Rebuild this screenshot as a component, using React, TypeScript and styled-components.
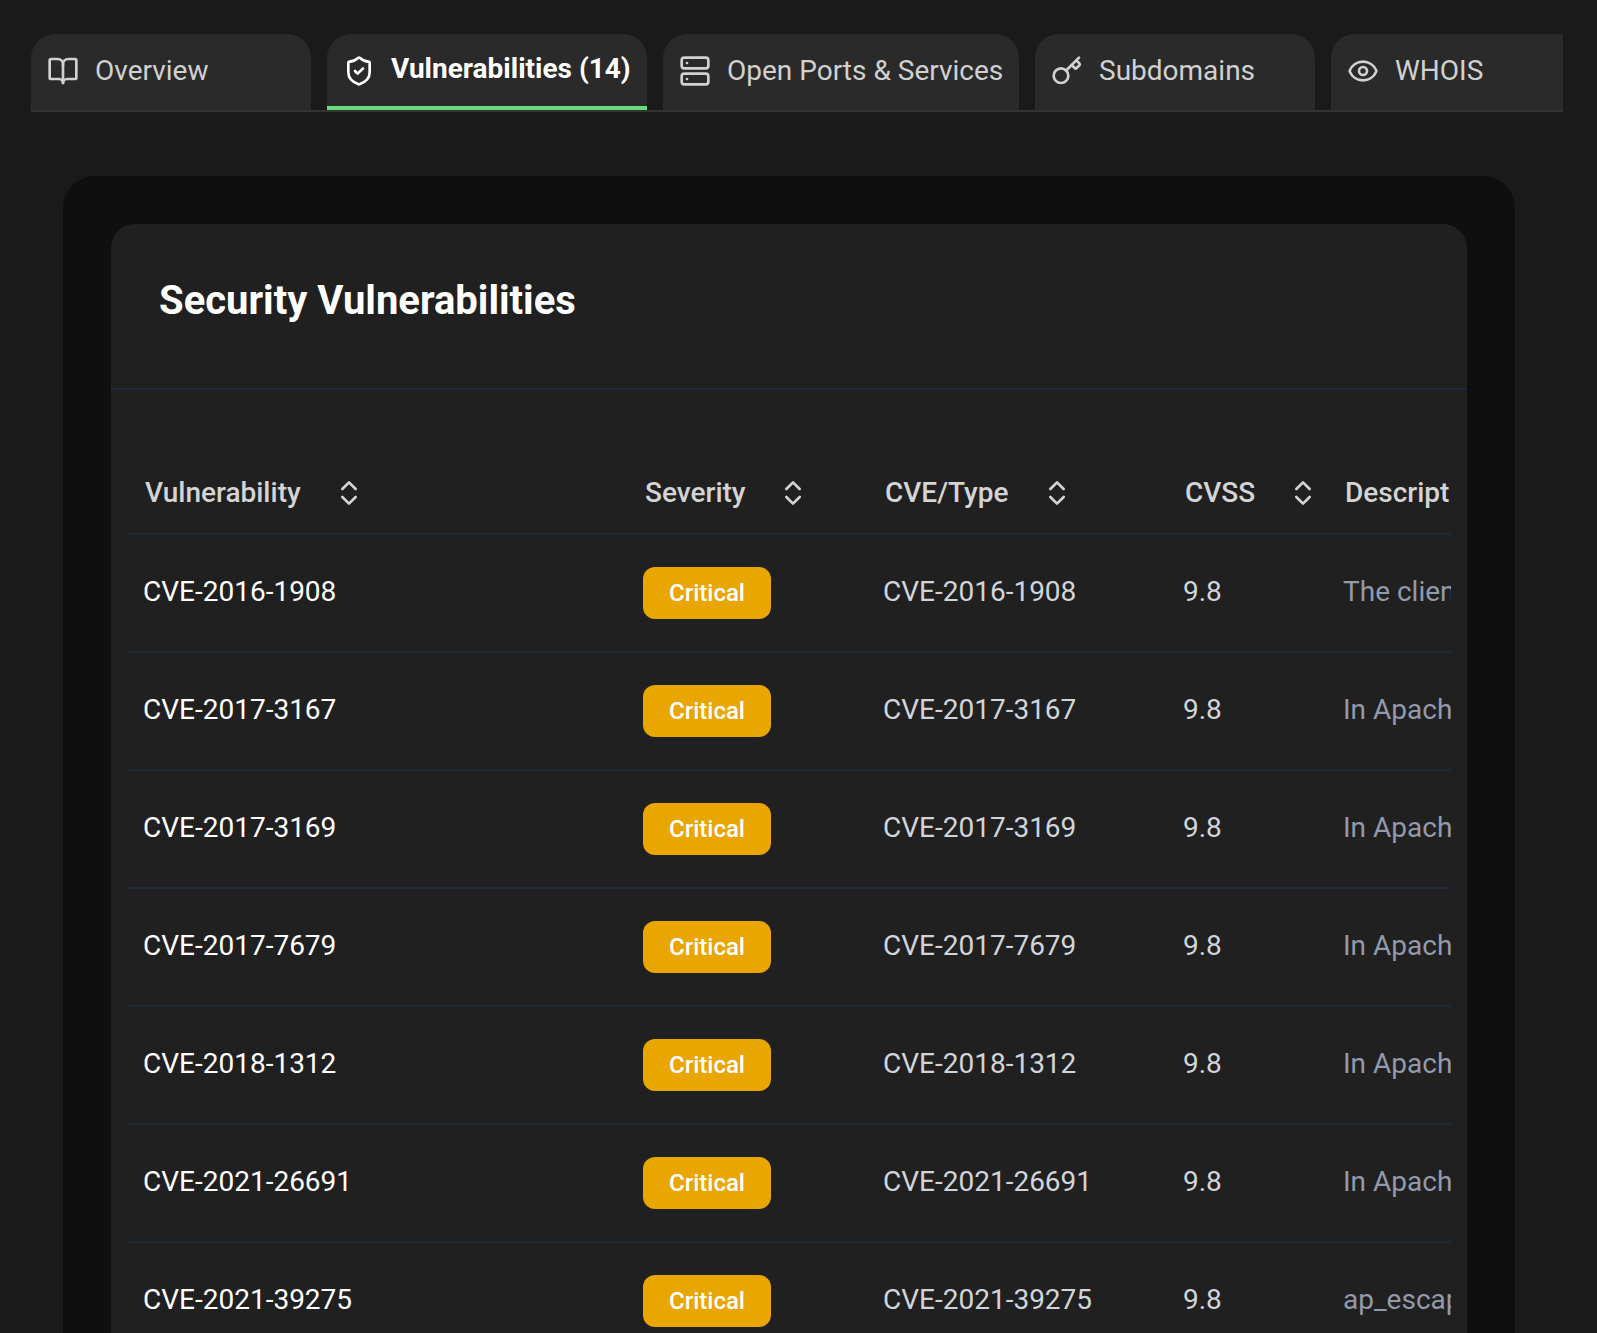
import React from "react";
import styled, { createGlobalStyle } from "styled-components";
import { Server, Eye, ChevronsUpDown, BookOpen, ShieldCheck, Key } from "lucide-react";

const Global = createGlobalStyle`
  html, body { margin: 0; padding: 0; background: #1a1a1a; overflow: hidden; height: 100%; }
  body { font-family: Roboto, "Noto Sans", sans-serif; }
`;

const Page = styled.div`
  width: 1597px;
  height: 1333px;
  overflow: hidden;
  padding: 34px 34px 0 31px;
  box-sizing: border-box;
`;

const TabBar = styled.div`
  display: flex;
  gap: 16px;
  border-bottom: 2px solid #333333;
  height: 76px;
  width: 1532px;
`;

const Tab = styled.div<{ $active?: boolean; $width: number; $last?: boolean }>`
  width: ${(p) => p.$width}px;
  box-sizing: border-box;
  height: 76px;
  background: #2a2a2a;
  border-radius: ${(p) => (p.$last ? "24px 0 0 0" : "24px 24px 0 0")};
  border-bottom: 4px solid ${(p) => (p.$active ? "#69db7c" : "transparent")};
  display: flex;
  align-items: center;
  gap: 16px;
  padding: 2px 0 0 16px;
  font-size: 28px;
  font-weight: ${(p) => (p.$active ? 700 : 400)};
  color: ${(p) => (p.$active ? "#ffffff" : "#d1d1d1")};
  white-space: nowrap;
`;

const TabLabel = styled.span<{ $active?: boolean }>`
  position: relative;
  top: ${(p) => (p.$active ? -2 : 0)}px;
  line-height: 32px;
`;

const Outer = styled.section`
  margin: 64px 0 0 32px;
  width: 1452px;
  background: #0f0f0f;
  border-radius: 32px 32px 0 0;
  padding: 48px 48px 0;
  box-sizing: border-box;
  height: 1200px;
`;

const Card = styled.div`
  background: #202020;
  border-radius: 24px 24px 0 0;
  height: 1152px;
  overflow: hidden;
`;

const CardHead = styled.header`
  height: 166px;
  box-sizing: border-box;
  border-bottom: 2px solid #1e293b;
  padding: 53px 48px 0;
`;

const Title = styled.h2`
  margin: 0;
  font-size: 40px;
  line-height: 48px;
  font-weight: 700;
  color: #ffffff;
`;

const TableWrap = styled.div`
  margin: 0 16px;
  overflow: hidden;
`;

const Table = styled.table`
  border-collapse: collapse;
  table-layout: fixed;
  width: 1600px;
`;

const Th = styled.th`
  height: 144px;
  box-sizing: border-box;
  padding: 62px 0 0 18px;
  text-align: left;
  font-size: 28px;
  font-weight: 500;
  color: #d4d4d4;
  border-bottom: 2px solid #1e293b;
  white-space: nowrap;
`;

const ThInner = styled.div`
  display: flex;
  align-items: center;
  height: 48px;
`;

const Sort = styled(ChevronsUpDown)<{ $gap: number }>`
  margin-left: ${(p) => p.$gap}px;
  width: 32px;
  height: 32px;
  color: #d4d4d4;
  flex: none;
`;

const Tr = styled.tr`
  height: 118px;
`;

const Td = styled.td<{ $tone?: string }>`
  padding: 0 0 4px 16px;
  height: 118px;
  box-sizing: border-box;
  font-size: 28px;
  color: ${(p) => p.$tone || "#d1d5db"};
  border-bottom: 2px solid #1e293b;
  white-space: nowrap;
  overflow: hidden;
`;

const BadgeCell = styled(Td)`
  padding-bottom: 0;
`;

const Badge = styled.span`
  display: inline-flex;
  align-items: center;
  justify-content: center;
  width: 128px;
  height: 52px;
  border-radius: 12px;
  background: #e9a500;
  color: #ffffff;
  font-size: 24px;
  font-weight: 500;
  vertical-align: middle;
`;

const tabs = [
  { label: "Overview", w: 280, icon: <BookOpen size={32} strokeWidth={2} /> },
  { label: "Vulnerabilities (14)", w: 320, active: true, icon: <ShieldCheck size={32} strokeWidth={2} /> },
  { label: "Open Ports & Services", w: 356, icon: <Server size={32} strokeWidth={2} /> },
  { label: "Subdomains", w: 280, icon: <Key size={32} strokeWidth={2} /> },
  { label: "WHOIS", w: 232, last: true, icon: <Eye size={32} strokeWidth={2} /> },
];

const rows = [
  ["CVE-2016-1908", "The client in OpenSSH before 7.2 mishandles failed cookie generation"],
  ["CVE-2017-3167", "In Apache httpd 2.2.x before 2.2.33 and 2.4.x before 2.4.26"],
  ["CVE-2017-3169", "In Apache httpd 2.2.x before 2.2.33 and 2.4.x before 2.4.26"],
  ["CVE-2017-7679", "In Apache httpd 2.2.x before 2.2.33 and 2.4.x before 2.4.26"],
  ["CVE-2018-1312", "In Apache httpd 2.2.0 to 2.4.29, when generating an HTTP Digest"],
  ["CVE-2021-26691", "In Apache HTTP Server versions 2.4.0 to 2.4.46 a crafted SessionHeader"],
  ["CVE-2021-39275", "ap_escape_quotes() may write beyond the end of a buffer"],
];

const cols = [
  { label: "Vulnerability", w: 500, gap: 32 },
  { label: "Severity", w: 240, gap: 31 },
  { label: "CVE/Type", w: 300, gap: 32 },
  { label: "CVSS", w: 160, gap: 32 },
  { label: "Description", w: 400, gap: 32 },
];

export default function App() {
  return (
    <Page>
      <Global />
      <TabBar>
        {tabs.map((t) => (
          <Tab key={t.label} $active={t.active} $width={t.w} $last={t.last}>
            {t.icon}
            <TabLabel $active={t.active}>{t.label}</TabLabel>
          </Tab>
        ))}
      </TabBar>
      <Outer>
        <Card>
          <CardHead>
            <Title>Security Vulnerabilities</Title>
          </CardHead>
          <TableWrap>
            <Table>
              <colgroup>
                {cols.map((c) => (
                  <col key={c.label} width={c.w} />
                ))}
              </colgroup>
              <thead>
                <tr>
                  {cols.map((c) => (
                    <Th key={c.label}>
                      <ThInner>
                        {c.label}
                        <Sort $gap={c.gap} />
                      </ThInner>
                    </Th>
                  ))}
                </tr>
              </thead>
              <tbody>
                {rows.map(([id, desc]) => (
                  <Tr key={id}>
                    <Td $tone="#ffffff">{id}</Td>
                    <BadgeCell>
                      <Badge>Critical</Badge>
                    </BadgeCell>
                    <Td>{id}</Td>
                    <Td>9.8</Td>
                    <Td $tone="#929aab">{desc}</Td>
                  </Tr>
                ))}
              </tbody>
            </Table>
          </TableWrap>
        </Card>
      </Outer>
    </Page>
  );
}
